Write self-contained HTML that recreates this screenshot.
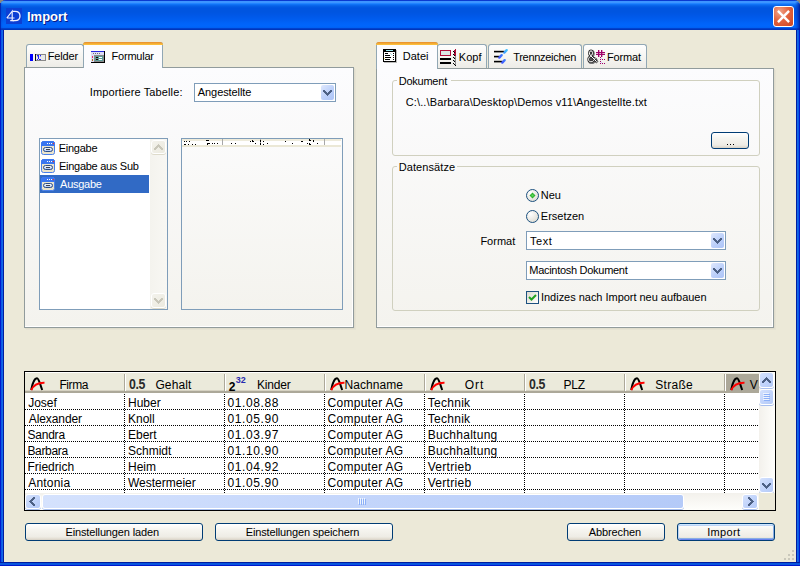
<!DOCTYPE html>
<html><head><meta charset="utf-8"><style>
*{box-sizing:border-box;margin:0;padding:0}
html,body{width:800px;height:566px;overflow:hidden;background:#8a887c}
body{position:relative;font-family:"Liberation Sans",sans-serif;font-size:11px;color:#000}
.a{position:absolute}
.t{position:absolute;white-space:nowrap;line-height:13px;font-size:11px}
svg{position:absolute;overflow:visible}
#frame{left:0;top:0;width:800px;height:566px;background:linear-gradient(to right,#0019cf 0,#0019cf 1px,#0855dd 1px,#166aee 3px,#001ea0 3px,#001ea0 4px,#0855dd 4px,#0855dd 796px,#001ea0 796px,#001ea0 797px,#166aee 797px,#0855dd 799px,#0019cf 799px);border-radius:6px 6px 0 0;overflow:hidden}
#bottomb{left:0;top:562px;width:800px;height:4px;background:linear-gradient(to bottom,#001ea0 0,#001ea0 1px,#0855dd 1px,#0855dd 3px,#0019cf 3px)}
#title{left:0;top:0;width:800px;height:30px;border-radius:6px 6px 0 0;
 background:linear-gradient(to bottom,#0a3ad0 0px,#0a3ad0 1px,#3d95ff 1px,#3d95ff 3px,#2284ff 3.5px,#0f72f5 4.5px,#0660e6 6px,#0055e0 8px,#0055e0 12px,#0057e6 15px,#005cee 19px,#0063f8 23px,#0066fc 26px,#0062f4 27.5px,#0048d8 28px,#0036bb 29.5px,#0036bb 30px)}
#client{left:4px;top:30px;width:792px;height:532px;background:#ece9d8}
.panel{position:absolute;border:1px solid #919b9c;background:linear-gradient(to bottom,#fcfcfe,#f4f3ee);box-shadow:inset -1px -1px 0 #fff,1px 1px 0 #e0ddcd,2px 2px 0 #e6e3d3}
.tab{position:absolute;border:1px solid #91a7b4;border-bottom:none;border-radius:3px 3px 0 0;background:linear-gradient(to bottom,#fefefe,#f6f5f1 50%,#ecebe6)}
.tabsel{position:absolute;border:1px solid #91a7b4;border-bottom:none;border-radius:3px 3px 0 0;background:#fcfcfe}
.tabsel:before{content:"";position:absolute;left:-1px;right:-1px;top:-1px;height:3px;background:linear-gradient(to bottom,#e68b2c,#ffc73c);border-radius:3px 3px 0 0}
.grp{position:absolute;border:1px solid #d0d0bf;border-radius:3px}
.combo{position:absolute;border:1px solid #7f9db9;background:#fff}
.cbtn{position:absolute;right:1px;top:1px;width:13px;height:15px;border-radius:2px;background:linear-gradient(135deg,#dfe8fd,#bcd0fa 55%,#adc4f7)}
.btn{position:absolute;border:1px solid #003c74;border-radius:3px;background:linear-gradient(to bottom,#fff,#f6f5f0 35%,#eeece5 80%,#e3ded3 92%,#d6d0c5)}
.sbtn{position:absolute;border-radius:3px;border:1px solid #fff;box-shadow:0 1px 0 #a9c0ee;background:linear-gradient(135deg,#d5e2fd,#c3d5fb 50%,#b4caf8)}
.dis{position:absolute;border-radius:3px;border:1px solid #fff;box-shadow:0 1px 0 #dedbcb;background:linear-gradient(135deg,#f3f2ec,#eceadf)}
</style></head><body>
<div id="frame" class="a"></div>
<div id="title" class="a"></div>
<div id="client" class="a"></div>
<div id="bottomb" class="a"></div>
<div class="a" style="left:795px;top:2px;width:5px;height:28px;border-top-right-radius:4px;background:linear-gradient(to right,rgba(0,40,180,0) 0px,rgba(0,40,180,0.35) 2px,rgba(0,30,160,0.7) 4px,rgba(0,20,140,0.9) 5px)"></div>
<div class="a" style="left:0px;top:3px;width:3px;height:27px;background:linear-gradient(to right,rgba(0,30,170,0.8) 0px,rgba(0,30,170,0.8) 1px,rgba(0,60,200,0.3) 1px,rgba(0,60,200,0) 3px)"></div>
<div class="a" style="left:6px;top:8px;width:16px;height:16px;background:#0c3fd4"></div>
<svg style="left:6px;top:8px" width="16" height="16"><path d="M0.8 10 L6.2 3.2 L6.2 12.6 M0.8 10 L8.5 10 M4.2 12.6 L8 12.6" fill="none" stroke="#eef0ff" stroke-width="1.2"/><path d="M6.5 3.3 L9 3.3 C12.5 3.3 14 5.5 14 8 C14 10.8 12 12.6 9 12.6 L6.5 12.6" fill="none" stroke="#eef0ff" stroke-width="1.3"/></svg>
<div class="t" style="left:28px;top:10px;font-size:13px;font-weight:bold;color:#0a1883;line-height:15px">Import</div>
<div class="t" style="left:27px;top:9px;font-size:13px;font-weight:bold;color:#fff;line-height:15px">Import</div>
<div class="a" style="left:773px;top:6px;width:21px;height:21px;border:1px solid #fff;border-radius:3px;background:radial-gradient(circle at 30% 25%,#f0a48a,#e3643f 45%,#cc4420)"></div>
<svg style="left:773px;top:6px" width="21" height="21"><path d="M5.8 5.8 L15.2 15.2 M15.2 5.8 L5.8 15.2" stroke="#fff" stroke-width="2.4" stroke-linecap="square"/></svg>
<div class="a" style="left:792px;top:550px;width:2px;height:2px;background:#cac8bb"></div>
<div class="a" style="left:788px;top:554px;width:2px;height:2px;background:#cac8bb"></div>
<div class="a" style="left:792px;top:554px;width:2px;height:2px;background:#cac8bb"></div>
<div class="a" style="left:784px;top:558px;width:2px;height:2px;background:#cac8bb"></div>
<div class="a" style="left:788px;top:558px;width:2px;height:2px;background:#cac8bb"></div>
<div class="a" style="left:792px;top:558px;width:2px;height:2px;background:#cac8bb"></div>
<div class="tab" style="left:26px;top:44px;width:58px;height:24px;"></div>
<div class="panel" style="left:24px;top:67px;width:330px;height:261px;"></div>
<div class="tabsel" style="left:83px;top:42px;width:80px;height:26px;"></div>
<svg style="left:30px;top:54px" width="17" height="8" shape-rendering="crispEdges"><rect x="0" y="0" width="3" height="7" fill="#0000ff" fill-opacity="1"/><rect x="5" y="0" width="11" height="7" fill="#888" fill-opacity="1"/><rect x="6" y="1" width="9" height="5" fill="#e8e8e8" fill-opacity="1"/><rect x="5" y="0" width="1" height="7" fill="#111" fill-opacity="1"/><rect x="7" y="1" width="2" height="1" fill="#2020ff" fill-opacity="1"/><rect x="10" y="1" width="1" height="1" fill="#2020ff" fill-opacity="1"/><rect x="8" y="2" width="1" height="3" fill="#2020ff" fill-opacity="1"/><rect x="7" y="5" width="1" height="1" fill="#2020ff" fill-opacity="1"/><rect x="9" y="5" width="2" height="1" fill="#2020ff" fill-opacity="1"/><rect x="7" y="2" width="1" height="1" fill="#9ac" fill-opacity="1"/><rect x="10" y="2" width="1" height="1" fill="#9ac" fill-opacity="1"/></svg>
<div class="t" id="t_felder" style="left:47.75px;top:50px;font-size:11px;line-height:13px;letter-spacing:-0.160px;">Felder</div>
<svg style="left:91px;top:51px" width="14" height="12" shape-rendering="crispEdges"><rect x="0" y="0" width="13" height="11" fill="#dcdcf6" fill-opacity="1"/><rect x="0" y="0" width="13" height="1" fill="#2424e0" fill-opacity="1"/><rect x="13" y="0" width="1" height="12" fill="#000" fill-opacity="1"/><rect x="0" y="11" width="14" height="1" fill="#000" fill-opacity="1"/><rect x="2" y="2" width="1" height="1" fill="#707070" fill-opacity="1"/><rect x="4" y="2" width="1" height="1" fill="#707070" fill-opacity="1"/><rect x="6" y="2" width="1" height="1" fill="#707070" fill-opacity="1"/><rect x="8" y="2" width="1" height="1" fill="#707070" fill-opacity="1"/><rect x="3" y="4" width="10" height="7" fill="#8a8a8a" fill-opacity="1"/><rect x="4" y="5" width="8" height="5" fill="#5a9a98" fill-opacity="1"/><rect x="5" y="6" width="2" height="1" fill="#200" fill-opacity="1"/><rect x="5" y="8" width="2" height="1" fill="#200" fill-opacity="1"/><rect x="8" y="6" width="3" height="1" fill="#fff" fill-opacity="1"/><rect x="8" y="8" width="3" height="1" fill="#fff" fill-opacity="1"/><rect x="1" y="5" width="1" height="2" fill="#e03060" fill-opacity="1"/><rect x="1" y="8" width="1" height="2" fill="#b07010" fill-opacity="1"/></svg>
<div class="t" id="t_formular" style="left:111.60px;top:50px;font-size:11px;line-height:13px;letter-spacing:-0.235px;">Formular</div>
<div class="t" id="t_imp" style="left:89.85px;top:86px;font-size:11px;line-height:13px;letter-spacing:0.131px;">Importiere Tabelle:</div>
<div class="combo" style="left:194px;top:83px;width:142px;height:19px;"><div class="cbtn"></div></div>
<svg style="left:323px;top:90px" width="9" height="6" shape-rendering="crispEdges"><rect x="0" y="0" width="2" height="1" fill="#4d6185" fill-opacity="1"/><rect x="7" y="0" width="2" height="1" fill="#4d6185" fill-opacity="1"/><rect x="0" y="1" width="3" height="1" fill="#4d6185" fill-opacity="1"/><rect x="6" y="1" width="3" height="1" fill="#4d6185" fill-opacity="1"/><rect x="1" y="2" width="3" height="1" fill="#4d6185" fill-opacity="1"/><rect x="5" y="2" width="3" height="1" fill="#4d6185" fill-opacity="1"/><rect x="2" y="3" width="5" height="1" fill="#4d6185" fill-opacity="1"/><rect x="3" y="4" width="3" height="1" fill="#4d6185" fill-opacity="1"/><rect x="4" y="5" width="1" height="1" fill="#4d6185" fill-opacity="1"/></svg>
<div class="t" id="t_ang" style="left:197.80px;top:86px;font-size:11px;line-height:13px;letter-spacing:-0.080px;">Angestellte</div>
<div class="combo" style="left:39px;top:138px;width:129px;height:172px;"></div>
<div class="a" style="left:150px;top:139px;width:17px;height:170px;background:linear-gradient(to right,#f4f3ee,#f8f7f3)"></div>
<div class="dis" style="left:151px;top:140px;width:15px;height:14px;"></div>
<svg style="left:154px;top:144px" width="9" height="6" shape-rendering="crispEdges"><rect x="4" y="0" width="1" height="1" fill="#c9c7ba" fill-opacity="1"/><rect x="3" y="1" width="3" height="1" fill="#c9c7ba" fill-opacity="1"/><rect x="2" y="2" width="5" height="1" fill="#c9c7ba" fill-opacity="1"/><rect x="1" y="3" width="3" height="1" fill="#c9c7ba" fill-opacity="1"/><rect x="5" y="3" width="3" height="1" fill="#c9c7ba" fill-opacity="1"/><rect x="0" y="4" width="3" height="1" fill="#c9c7ba" fill-opacity="1"/><rect x="6" y="4" width="3" height="1" fill="#c9c7ba" fill-opacity="1"/><rect x="0" y="5" width="2" height="1" fill="#c9c7ba" fill-opacity="1"/><rect x="7" y="5" width="2" height="1" fill="#c9c7ba" fill-opacity="1"/></svg>
<div class="dis" style="left:151px;top:293px;width:15px;height:15px;"></div>
<svg style="left:154px;top:298px" width="9" height="6" shape-rendering="crispEdges"><rect x="0" y="0" width="2" height="1" fill="#c9c7ba" fill-opacity="1"/><rect x="7" y="0" width="2" height="1" fill="#c9c7ba" fill-opacity="1"/><rect x="0" y="1" width="3" height="1" fill="#c9c7ba" fill-opacity="1"/><rect x="6" y="1" width="3" height="1" fill="#c9c7ba" fill-opacity="1"/><rect x="1" y="2" width="3" height="1" fill="#c9c7ba" fill-opacity="1"/><rect x="5" y="2" width="3" height="1" fill="#c9c7ba" fill-opacity="1"/><rect x="2" y="3" width="5" height="1" fill="#c9c7ba" fill-opacity="1"/><rect x="3" y="4" width="3" height="1" fill="#c9c7ba" fill-opacity="1"/><rect x="4" y="5" width="1" height="1" fill="#c9c7ba" fill-opacity="1"/></svg>
<div class="a" style="left:40px;top:175px;width:109px;height:18px;background:#316ac5"></div>
<svg style="left:41px;top:141px" width="14" height="14"><defs><linearGradient id="pg" x1="0" y1="0" x2="0" y2="1"><stop offset="0" stop-color="#ffffff"/><stop offset="1" stop-color="#a8c0f0"/></linearGradient></defs><rect x="0.5" y="0.5" width="13" height="13" rx="2" fill="#ebe4cc" stroke="#4a80e8"/><path d="M0.5 4.5 L0.5 2.5 Q0.5 0.5 2.5 0.5 L11.5 0.5 Q13.5 0.5 13.5 2.5 L13.5 4.5 Z" fill="#3a76f0" stroke="#3a76f0"/><rect x="6" y="2" width="1" height="1" fill="#fff"/><rect x="8" y="2" width="1" height="1" fill="#fff"/><rect x="10" y="2" width="1" height="1" fill="#fff"/><rect x="12" y="2" width="1" height="1.2" fill="#ff3020"/><rect x="2.5" y="6.5" width="9" height="4" rx="2" fill="url(#pg)" stroke="#2a4c88"/><rect x="5" y="8" width="4" height="1" fill="#444"/></svg>
<div class="t" id="t_list0" style="left:58.75px;top:142px;font-size:11px;line-height:13px;letter-spacing:-0.265px;color:#000">Eingabe</div>
<svg style="left:41px;top:159px" width="14" height="14"><defs><linearGradient id="pg" x1="0" y1="0" x2="0" y2="1"><stop offset="0" stop-color="#ffffff"/><stop offset="1" stop-color="#a8c0f0"/></linearGradient></defs><rect x="0.5" y="0.5" width="13" height="13" rx="2" fill="#ebe4cc" stroke="#4a80e8"/><path d="M0.5 4.5 L0.5 2.5 Q0.5 0.5 2.5 0.5 L11.5 0.5 Q13.5 0.5 13.5 2.5 L13.5 4.5 Z" fill="#3a76f0" stroke="#3a76f0"/><rect x="6" y="2" width="1" height="1" fill="#fff"/><rect x="8" y="2" width="1" height="1" fill="#fff"/><rect x="10" y="2" width="1" height="1" fill="#fff"/><rect x="12" y="2" width="1" height="1.2" fill="#ff3020"/><rect x="2.5" y="6.5" width="9" height="4" rx="2" fill="url(#pg)" stroke="#2a4c88"/><rect x="5" y="8" width="4" height="1" fill="#444"/></svg>
<div class="t" id="t_list1" style="left:59.00px;top:160px;font-size:11px;line-height:13px;letter-spacing:-0.280px;color:#000">Eingabe aus Sub</div>
<svg style="left:41px;top:177px" width="14" height="14"><defs><linearGradient id="pg" x1="0" y1="0" x2="0" y2="1"><stop offset="0" stop-color="#ffffff"/><stop offset="1" stop-color="#a8c0f0"/></linearGradient></defs><rect x="0.5" y="0.5" width="13" height="13" rx="2" fill="#ebe4cc" stroke="#4a80e8"/><path d="M0.5 4.5 L0.5 2.5 Q0.5 0.5 2.5 0.5 L11.5 0.5 Q13.5 0.5 13.5 2.5 L13.5 4.5 Z" fill="#3a76f0" stroke="#3a76f0"/><rect x="6" y="2" width="1" height="1" fill="#fff"/><rect x="8" y="2" width="1" height="1" fill="#fff"/><rect x="10" y="2" width="1" height="1" fill="#fff"/><rect x="12" y="2" width="1" height="1.2" fill="#ff3020"/><rect x="2.5" y="6.5" width="9" height="4" rx="2" fill="url(#pg)" stroke="#2a4c88"/><rect x="5" y="8" width="4" height="1" fill="#444"/></svg>
<div class="t" id="t_list2" style="left:60.10px;top:178px;font-size:11px;line-height:13px;letter-spacing:-0.268px;color:#fff">Ausgabe</div>
<div class="combo" style="left:181px;top:138px;width:162px;height:172px;background:linear-gradient(to bottom,#fbfbfb,#f4f3ee)"></div>
<svg style="left:182px;top:139px" width="159" height="8" shape-rendering="crispEdges"><rect x="0" y="0" width="159" height="2" fill="#eeebdb" fill-opacity="1"/><rect x="0" y="2" width="159" height="4" fill="#ffffff" fill-opacity="1"/><rect x="0" y="6" width="159" height="2" fill="#ebe8d6" fill-opacity="1"/></svg>
<svg style="left:222px;top:139px" width="1" height="6" shape-rendering="crispEdges"><rect x="0" y="0" width="1" height="6" fill="#a8a8a8" fill-opacity="1"/></svg>
<svg style="left:260px;top:139px" width="1" height="6" shape-rendering="crispEdges"><rect x="0" y="0" width="1" height="6" fill="#a8a8a8" fill-opacity="1"/></svg>
<svg style="left:324px;top:139px" width="1" height="6" shape-rendering="crispEdges"><rect x="0" y="0" width="1" height="6" fill="#a8a8a8" fill-opacity="1"/></svg>
<svg style="left:182px;top:139px" width="159" height="8" shape-rendering="crispEdges"><rect x="2" y="2" width="1" height="1" fill="#000" fill-opacity="1"/><rect x="4" y="2" width="1" height="1" fill="#000" fill-opacity="1"/><rect x="7" y="2" width="1" height="1" fill="#000" fill-opacity="1"/><rect x="2" y="5" width="1" height="1" fill="#000" fill-opacity="1"/><rect x="3" y="5" width="1" height="1" fill="#000" fill-opacity="1"/><rect x="6" y="5" width="1" height="1" fill="#000" fill-opacity="1"/><rect x="10" y="5" width="1" height="1" fill="#000" fill-opacity="1"/><rect x="13" y="5" width="1" height="1" fill="#000" fill-opacity="1"/><rect x="24" y="1" width="1" height="1" fill="#000" fill-opacity="1"/><rect x="25" y="1" width="1" height="1" fill="#000" fill-opacity="1"/><rect x="26" y="1" width="1" height="1" fill="#000" fill-opacity="1"/><rect x="25" y="4" width="1" height="1" fill="#000" fill-opacity="1"/><rect x="26" y="4" width="1" height="1" fill="#000" fill-opacity="1"/><rect x="27" y="4" width="1" height="1" fill="#000" fill-opacity="1"/><rect x="25" y="5" width="1" height="1" fill="#000" fill-opacity="1"/><rect x="30" y="4" width="1" height="1" fill="#000" fill-opacity="1"/><rect x="32" y="4" width="1" height="1" fill="#000" fill-opacity="1"/><rect x="35" y="4" width="1" height="1" fill="#000" fill-opacity="1"/><rect x="49" y="4" width="1" height="1" fill="#000" fill-opacity="1"/><rect x="53" y="4" width="1" height="1" fill="#000" fill-opacity="1"/><rect x="68" y="2" width="1" height="1" fill="#000" fill-opacity="1"/><rect x="70" y="1" width="1" height="1" fill="#000" fill-opacity="1"/><rect x="71" y="2" width="1" height="1" fill="#000" fill-opacity="1"/><rect x="70" y="2" width="1" height="1" fill="#000" fill-opacity="1"/><rect x="73" y="4" width="1" height="1" fill="#000" fill-opacity="1"/><rect x="78" y="1" width="1" height="1" fill="#000" fill-opacity="1"/><rect x="78" y="2" width="1" height="1" fill="#000" fill-opacity="1"/><rect x="78" y="4" width="1" height="1" fill="#000" fill-opacity="1"/><rect x="78" y="5" width="1" height="1" fill="#000" fill-opacity="1"/><rect x="81" y="2" width="1" height="1" fill="#000" fill-opacity="1"/><rect x="81" y="5" width="1" height="1" fill="#000" fill-opacity="1"/><rect x="85" y="4" width="1" height="1" fill="#000" fill-opacity="1"/><rect x="103" y="2" width="1" height="1" fill="#000" fill-opacity="1"/><rect x="110" y="4" width="1" height="1" fill="#000" fill-opacity="1"/><rect x="119" y="2" width="1" height="1" fill="#000" fill-opacity="1"/><rect x="120" y="2" width="1" height="1" fill="#000" fill-opacity="1"/><rect x="125" y="4" width="1" height="1" fill="#000" fill-opacity="1"/><rect x="127" y="4" width="1" height="1" fill="#000" fill-opacity="1"/><rect x="128" y="5" width="1" height="1" fill="#000" fill-opacity="1"/><rect x="127" y="5" width="1" height="1" fill="#000" fill-opacity="1"/><rect x="127" y="0" width="1" height="1" fill="#000" fill-opacity="1"/><rect x="127" y="1" width="1" height="1" fill="#000" fill-opacity="1"/><rect x="128" y="1" width="1" height="1" fill="#000" fill-opacity="1"/><rect x="131" y="1" width="1" height="1" fill="#000" fill-opacity="1"/><rect x="131" y="2" width="1" height="1" fill="#000" fill-opacity="1"/><rect x="135" y="4" width="1" height="1" fill="#000" fill-opacity="1"/></svg>
<div class="tab" style="left:437px;top:44px;width:50px;height:25px;"></div>
<div class="tab" style="left:488px;top:44px;width:94px;height:25px;"></div>
<div class="tab" style="left:583px;top:44px;width:64px;height:25px;"></div>
<div class="panel" style="left:376px;top:68px;width:398px;height:260px;"></div>
<div class="tabsel" style="left:376px;top:42px;width:62px;height:27px;"></div>
<svg style="left:383px;top:49px" width="14" height="14" shape-rendering="crispEdges"><rect x="0" y="0" width="13" height="13" fill="#000" fill-opacity="1"/><rect x="13" y="1" width="1" height="13" fill="#bbb" fill-opacity="1"/><rect x="1" y="13" width="13" height="1" fill="#bbb" fill-opacity="1"/><rect x="1" y="3" width="11" height="9" fill="#fff" fill-opacity="1"/><rect x="3" y="1" width="7" height="1" fill="#9de8f0" fill-opacity="1"/><rect x="2" y="4" width="3" height="1" fill="#000" fill-opacity="1"/><rect x="2" y="6" width="5" height="1" fill="#000" fill-opacity="1"/><rect x="2" y="8" width="6" height="1" fill="#000" fill-opacity="1"/><rect x="2" y="10" width="5" height="1" fill="#000" fill-opacity="1"/><rect x="10" y="4" width="1" height="1" fill="#000" fill-opacity="1"/><rect x="10" y="6" width="1" height="1" fill="#000" fill-opacity="1"/><rect x="10" y="8" width="1" height="1" fill="#000" fill-opacity="1"/><rect x="10" y="10" width="1" height="1" fill="#000" fill-opacity="1"/><rect x="7" y="4" width="1" height="1" fill="#ccc" fill-opacity="1"/><rect x="8" y="5" width="1" height="1" fill="#9de8f0" fill-opacity="1"/><rect x="1" y="9" width="1" height="1" fill="#f8e860" fill-opacity="1"/></svg>
<div class="t" id="t_datei" style="left:402.80px;top:50px;font-size:11px;line-height:13px;letter-spacing:-0.000px;">Datei</div>
<svg style="left:440px;top:48px" width="17" height="18" shape-rendering="crispEdges"><rect x="0" y="2" width="11" height="6" fill="#b0103a" fill-opacity="1"/><rect x="1" y="3" width="9" height="4" fill="#dde8e6" fill-opacity="1"/><rect x="0" y="10" width="11" height="2" fill="#000" fill-opacity="1"/><rect x="0" y="14" width="11" height="2" fill="#000" fill-opacity="1"/><rect x="15" y="1" width="1" height="7" fill="#b0103a" fill-opacity="1"/><rect x="14" y="2" width="1" height="2" fill="#b0103a" fill-opacity="1"/><rect x="14" y="5" width="1" height="2" fill="#b0103a" fill-opacity="1"/><rect x="13" y="3" width="1" height="1" fill="#000" fill-opacity="1"/><rect x="14" y="4" width="1" height="1" fill="#000" fill-opacity="1"/><rect x="13" y="6" width="1" height="1" fill="#000" fill-opacity="1"/><rect x="14" y="7" width="1" height="1" fill="#000" fill-opacity="1"/><rect x="15" y="8" width="1" height="9" fill="#888" fill-opacity="1"/><rect x="14" y="9" width="1" height="2" fill="#aaa" fill-opacity="1"/><rect x="14" y="12" width="1" height="2" fill="#aaa" fill-opacity="1"/><rect x="13" y="9" width="1" height="1" fill="#000" fill-opacity="1"/><rect x="14" y="10" width="1" height="1" fill="#000" fill-opacity="1"/><rect x="13" y="12" width="1" height="1" fill="#000" fill-opacity="1"/><rect x="14" y="13" width="1" height="1" fill="#000" fill-opacity="1"/><rect x="13" y="15" width="1" height="1" fill="#000" fill-opacity="1"/><rect x="14" y="16" width="1" height="1" fill="#000" fill-opacity="1"/><rect x="15" y="17" width="1" height="1" fill="#000" fill-opacity="1"/></svg>
<div class="t" id="t_kopf" style="left:458.80px;top:51px;font-size:11px;line-height:13px;letter-spacing:0.004px;">Kopf</div>
<svg style="left:494px;top:49px" width="14" height="15"><defs><linearGradient id="tzg" x1="0" y1="1" x2="1" y2="0"><stop offset="0" stop-color="#4040ff"/><stop offset="1" stop-color="#40c0ff"/></linearGradient></defs><rect x="0" y="1.8" width="10.5" height="1.6" fill="#000"/><rect x="0" y="6.8" width="5.5" height="1.6" fill="#000"/><rect x="0" y="11.8" width="8.5" height="1.6" fill="#000"/><path d="M10.3 3.6 L12.7 1.2 M5.3 8.6 L7.7 6.2 M8.3 13.6 L10.7 11.2" stroke="url(#tzg)" stroke-width="2.4" stroke-linecap="round"/></svg>
<div class="t" id="t_trenn" style="left:513.20px;top:51px;font-size:11px;line-height:13px;letter-spacing:-0.289px;">Trennzeichen</div>
<svg style="left:587px;top:49px" width="19" height="16"><path d="M9.7 12.7 L3.2 6.2 C2 5 2.2 1.8 4 1.8 C5.8 1.8 6 4.8 4.8 6 L2.5 8.2 C1 9.6 1.2 12.8 4 12.8 C6 12.8 7.2 11 8.6 8.6" fill="none" stroke="#777" stroke-width="3" transform="translate(0.8,0.8)"/><path d="M9.7 12.7 L3.2 6.2 C2 5 2.2 1.8 4 1.8 C5.8 1.8 6 4.8 4.8 6 L2.5 8.2 C1 9.6 1.2 12.8 4 12.8 C6 12.8 7.2 11 8.6 8.6" fill="#555" stroke="#2e2e2e" stroke-width="2.6"/><path d="M9.7 12.7 L3.2 6.2 C2 5 2.2 1.8 4 1.8 C5.8 1.8 6 4.8 4.8 6 L2.5 8.2 C1 9.6 1.2 12.8 4 12.8 C6 12.8 7.2 11 8.6 8.6" fill="none" stroke="#fff" stroke-width="1"/></svg>
<svg style="left:587px;top:49px" width="19" height="16" shape-rendering="crispEdges"><rect x="11" y="1" width="1" height="7" fill="#a0006a" fill-opacity="1"/><rect x="12" y="1" width="1" height="7" fill="#a0006a" fill-opacity="0.35"/><rect x="14" y="1" width="1" height="7" fill="#a0006a" fill-opacity="1"/><rect x="15" y="1" width="1" height="7" fill="#a0006a" fill-opacity="0.35"/><rect x="9" y="3" width="9" height="1" fill="#a0006a" fill-opacity="1"/><rect x="9" y="5" width="9" height="1" fill="#a0006a" fill-opacity="1"/><rect x="9" y="4" width="9" height="1" fill="#a0006a" fill-opacity="0.25"/><rect x="13" y="8" width="1" height="1" fill="#a0006a" fill-opacity="1"/><rect x="13" y="10" width="1" height="1" fill="#a0006a" fill-opacity="1"/><rect x="13" y="12" width="1" height="1" fill="#a0006a" fill-opacity="1"/><rect x="13" y="14" width="1" height="1" fill="#a0006a" fill-opacity="1"/><rect x="15" y="10" width="1" height="1" fill="#a0006a" fill-opacity="1"/><rect x="17" y="10" width="1" height="1" fill="#a0006a" fill-opacity="1"/><rect x="15" y="14" width="1" height="1" fill="#a0006a" fill-opacity="1"/><rect x="17" y="14" width="1" height="1" fill="#a0006a" fill-opacity="1"/><rect x="14" y="9" width="1" height="1" fill="#c8c8ff" fill-opacity="1"/><rect x="14" y="13" width="1" height="1" fill="#c8c8ff" fill-opacity="1"/></svg>
<div class="t" id="t_formattab" style="left:607.00px;top:51px;font-size:11px;line-height:13px;letter-spacing:-0.160px;">Format</div>
<div class="grp" style="left:392px;top:80px;width:368px;height:76px;"></div>
<div class="a" style="left:397px;top:76px;width:54px;height:8px;background:#fbfbfc"></div>
<div class="t" id="t_dok" style="left:398.70px;top:75px;font-size:11px;line-height:13px;letter-spacing:-0.232px;">Dokument</div>
<div class="t" id="t_path" style="left:405.80px;top:96px;font-size:11px;line-height:13px;letter-spacing:0.114px;">C:\..\Barbara\Desktop\Demos v11\Angestellte.txt</div>
<div class="btn" style="left:711px;top:132px;width:38px;height:17px;"></div>
<svg style="left:727px;top:144px" width="8" height="1" shape-rendering="crispEdges"><rect x="0" y="0" width="1" height="1" fill="#000" fill-opacity="1"/><rect x="3" y="0" width="1" height="1" fill="#000" fill-opacity="1"/><rect x="6" y="0" width="1" height="1" fill="#000" fill-opacity="1"/></svg>
<div class="grp" style="left:392px;top:166px;width:368px;height:145px;"></div>
<div class="a" style="left:397px;top:162px;width:60px;height:8px;background:#f9f9f8"></div>
<div class="t" id="t_datens" style="left:398.70px;top:161px;font-size:11px;line-height:13px;letter-spacing:0.088px;">Datens&auml;tze</div>
<svg style="left:526px;top:189px" width="13" height="13"><defs><radialGradient id="rg189" cx="0.35" cy="0.3" r="0.8"><stop offset="0" stop-color="#fff"/><stop offset="1" stop-color="#dcdad0"/></radialGradient></defs><circle cx="6.5" cy="6.5" r="6" fill="url(#rg189)" stroke="#1c5180" stroke-width="1"/><path d="M6.5 3.5 L9.5 6.5 L6.5 9.5 L3.5 6.5Z" fill="#2fb12f"/><rect x="5.5" y="5.5" width="2" height="2" fill="#5fdc5f"/></svg>
<div class="t" id="t_neu" style="left:540.80px;top:189px;font-size:11px;line-height:13px;letter-spacing:0.000px;">Neu</div>
<svg style="left:526px;top:210px" width="13" height="13"><defs><radialGradient id="rg210" cx="0.35" cy="0.3" r="0.8"><stop offset="0" stop-color="#fff"/><stop offset="1" stop-color="#dcdad0"/></radialGradient></defs><circle cx="6.5" cy="6.5" r="6" fill="url(#rg210)" stroke="#1c5180" stroke-width="1"/></svg>
<div class="t" id="t_ers" style="left:540.80px;top:210px;font-size:11px;line-height:13px;letter-spacing:0.004px;">Ersetzen</div>
<div class="t" id="t_formatlbl" style="left:480.40px;top:235px;font-size:11px;line-height:13px;letter-spacing:0.000px;">Format</div>
<div class="combo" style="left:526px;top:231px;width:200px;height:19px;"><div class="cbtn"></div></div>
<svg style="left:713px;top:238px" width="9" height="6" shape-rendering="crispEdges"><rect x="0" y="0" width="2" height="1" fill="#4d6185" fill-opacity="1"/><rect x="7" y="0" width="2" height="1" fill="#4d6185" fill-opacity="1"/><rect x="0" y="1" width="3" height="1" fill="#4d6185" fill-opacity="1"/><rect x="6" y="1" width="3" height="1" fill="#4d6185" fill-opacity="1"/><rect x="1" y="2" width="3" height="1" fill="#4d6185" fill-opacity="1"/><rect x="5" y="2" width="3" height="1" fill="#4d6185" fill-opacity="1"/><rect x="2" y="3" width="5" height="1" fill="#4d6185" fill-opacity="1"/><rect x="3" y="4" width="3" height="1" fill="#4d6185" fill-opacity="1"/><rect x="4" y="5" width="1" height="1" fill="#4d6185" fill-opacity="1"/></svg>
<div class="t" id="t_text" style="left:530.05px;top:235px;font-size:11px;line-height:13px;letter-spacing:0.537px;">Text</div>
<div class="combo" style="left:526px;top:261px;width:200px;height:19px;"><div class="cbtn"></div></div>
<svg style="left:713px;top:268px" width="9" height="6" shape-rendering="crispEdges"><rect x="0" y="0" width="2" height="1" fill="#4d6185" fill-opacity="1"/><rect x="7" y="0" width="2" height="1" fill="#4d6185" fill-opacity="1"/><rect x="0" y="1" width="3" height="1" fill="#4d6185" fill-opacity="1"/><rect x="6" y="1" width="3" height="1" fill="#4d6185" fill-opacity="1"/><rect x="1" y="2" width="3" height="1" fill="#4d6185" fill-opacity="1"/><rect x="5" y="2" width="3" height="1" fill="#4d6185" fill-opacity="1"/><rect x="2" y="3" width="5" height="1" fill="#4d6185" fill-opacity="1"/><rect x="3" y="4" width="3" height="1" fill="#4d6185" fill-opacity="1"/><rect x="4" y="5" width="1" height="1" fill="#4d6185" fill-opacity="1"/></svg>
<div class="t" id="t_mac" style="left:529.25px;top:264px;font-size:11px;line-height:13px;letter-spacing:-0.285px;">Macintosh Dokument</div>
<div class="a" style="left:526px;top:291px;width:13px;height:13px;border:1px solid #1c5180;background:linear-gradient(135deg,#dcdad0,#f5f4ef 70%,#fff)"></div>
<svg style="left:526px;top:291px" width="13" height="13"><path d="M3 6 L5.5 8.5 L10 4" fill="none" stroke="#21a121" stroke-width="2"/></svg>
<div class="t" id="t_ind" style="left:541.00px;top:291px;font-size:11px;line-height:13px;letter-spacing:-0.026px;">Indizes nach Import neu aufbauen</div>
<div class="a" style="left:24px;top:371px;width:752px;height:140px;border:1px solid #000;background:#fff"></div>
<div class="a" style="left:25px;top:372px;width:734px;height:21px;background:linear-gradient(to bottom,#fff 0,#fff 1px,#ebeadb 1px,#ebeadb 18px,#d6d2c2 18px,#d6d2c2 19px,#aca899 19px,#aca899 21px)"></div>
<div class="a" style="left:725px;top:374px;width:34px;height:19px;background:#aca899"></div>
<div class="a" style="left:124px;top:374px;width:1px;height:17px;background:#aca899"></div>
<div class="a" style="left:125px;top:374px;width:1px;height:17px;background:#fff"></div>
<div class="a" style="left:224px;top:374px;width:1px;height:17px;background:#aca899"></div>
<div class="a" style="left:225px;top:374px;width:1px;height:17px;background:#fff"></div>
<div class="a" style="left:324px;top:374px;width:1px;height:17px;background:#aca899"></div>
<div class="a" style="left:325px;top:374px;width:1px;height:17px;background:#fff"></div>
<div class="a" style="left:424px;top:374px;width:1px;height:17px;background:#aca899"></div>
<div class="a" style="left:425px;top:374px;width:1px;height:17px;background:#fff"></div>
<div class="a" style="left:524px;top:374px;width:1px;height:17px;background:#aca899"></div>
<div class="a" style="left:525px;top:374px;width:1px;height:17px;background:#fff"></div>
<div class="a" style="left:624px;top:374px;width:1px;height:17px;background:#aca899"></div>
<div class="a" style="left:625px;top:374px;width:1px;height:17px;background:#fff"></div>
<div class="a" style="left:724px;top:374px;width:1px;height:17px;background:#aca899"></div>
<div class="a" style="left:725px;top:374px;width:1px;height:17px;background:#fff"></div>
<svg style="left:30px;top:377px" width="16" height="15"><path d="M1.2 13 C2.2 7 4.5 1.2 7 1.2 C8.8 1.2 9.6 6 12.2 13" fill="none" stroke="#000" stroke-width="2"/><path d="M1.2 13.2 C3 9 6.5 5.6 14.5 5.8" fill="none" stroke="#f00" stroke-width="2.1"/></svg>
<div class="t" id="t_h0" style="left:59.40px;top:378px;font-size:12px;line-height:14px;letter-spacing:-0.400px;">Firma</div>
<div class="t" style="left:128.6px;top:377px;font-size:14px;line-height:14px;font-weight:bold;color:#2a2a2a;letter-spacing:-0.4px;transform:scaleX(0.88);transform-origin:0 0">0.5</div>
<div class="t" id="t_h1" style="left:155.40px;top:378px;font-size:12px;line-height:14px;letter-spacing:0.120px;">Gehalt</div>
<div class="t" id="t_two" style="left:228.80px;top:380px;font-size:12px;line-height:14px;letter-spacing:0.000px;font-weight:bold">2</div>
<div class="t" id="t_32" style="left:235.66px;top:375px;font-size:9px;line-height:13px;letter-spacing:0.000px;font-weight:bold;color:#2a2ab0;line-height:11px">32</div>
<div class="t" id="t_h2" style="left:257.00px;top:378px;font-size:12px;line-height:14px;letter-spacing:-0.200px;">Kinder</div>
<svg style="left:330px;top:377px" width="16" height="15"><path d="M1.2 13 C2.2 7 4.5 1.2 7 1.2 C8.8 1.2 9.6 6 12.2 13" fill="none" stroke="#000" stroke-width="2"/><path d="M1.2 13.2 C3 9 6.5 5.6 14.5 5.8" fill="none" stroke="#f00" stroke-width="2.1"/></svg>
<div class="t" id="t_h3" style="left:344.60px;top:378px;font-size:12px;line-height:14px;letter-spacing:0.029px;">Nachname</div>
<svg style="left:430px;top:377px" width="16" height="15"><path d="M1.2 13 C2.2 7 4.5 1.2 7 1.2 C8.8 1.2 9.6 6 12.2 13" fill="none" stroke="#000" stroke-width="2"/><path d="M1.2 13.2 C3 9 6.5 5.6 14.5 5.8" fill="none" stroke="#f00" stroke-width="2.1"/></svg>
<div class="t" id="t_h4" style="left:464.75px;top:378px;font-size:12px;line-height:14px;letter-spacing:1.000px;">Ort</div>
<div class="t" style="left:528.6px;top:377px;font-size:14px;line-height:14px;font-weight:bold;color:#2a2a2a;letter-spacing:-0.4px;transform:scaleX(0.88);transform-origin:0 0">0.5</div>
<div class="t" id="t_h5" style="left:563.50px;top:378px;font-size:12px;line-height:14px;letter-spacing:-0.200px;">PLZ</div>
<svg style="left:630px;top:377px" width="16" height="15"><path d="M1.2 13 C2.2 7 4.5 1.2 7 1.2 C8.8 1.2 9.6 6 12.2 13" fill="none" stroke="#000" stroke-width="2"/><path d="M1.2 13.2 C3 9 6.5 5.6 14.5 5.8" fill="none" stroke="#f00" stroke-width="2.1"/></svg>
<div class="t" id="t_h6" style="left:655.25px;top:378px;font-size:12px;line-height:14px;letter-spacing:0.280px;">Stra&szlig;e</div>
<svg style="left:730px;top:377px" width="16" height="15"><path d="M1.2 13 C2.2 7 4.5 1.2 7 1.2 C8.8 1.2 9.6 6 12.2 13" fill="none" stroke="#000" stroke-width="2"/><path d="M1.2 13.2 C3 9 6.5 5.6 14.5 5.8" fill="none" stroke="#f00" stroke-width="2.1"/></svg>
<div class="t" id="t_h7" style="left:749.80px;top:378px;font-size:12px;line-height:14px;letter-spacing:-0.200px;">V</div>
<div class="t" id="t_r0c0" style="left:28.20px;top:396px;font-size:12px;line-height:14px;letter-spacing:0.000px;">Josef</div>
<div class="t" id="t_r0c1" style="left:128.00px;top:396px;font-size:12px;line-height:14px;letter-spacing:0.000px;">Huber</div>
<div class="t" id="t_r0c2" style="left:227.50px;top:396px;font-size:12px;line-height:14px;letter-spacing:0.605px;">01.08.88</div>
<div class="t" id="t_r0c3" style="left:327.50px;top:396px;font-size:12px;line-height:14px;letter-spacing:0.280px;">Computer AG</div>
<div class="t" style="left:427.75px;top:396px;font-size:12px;line-height:14px;letter-spacing:0.280px">Technik</div>
<div class="a" style="left:25px;top:409px;width:734px;height:1px;background:repeating-linear-gradient(to right,#000 0,#000 1px,transparent 1px,transparent 2px)"></div>
<div class="t" id="t_r1c0" style="left:28.80px;top:412px;font-size:12px;line-height:14px;letter-spacing:-0.100px;">Alexander</div>
<div class="t" style="left:128.00px;top:412px;font-size:12px;line-height:14px;letter-spacing:0.000px">Knoll</div>
<div class="t" style="left:227.50px;top:412px;font-size:12px;line-height:14px;letter-spacing:0.605px">01.05.90</div>
<div class="t" style="left:327.50px;top:412px;font-size:12px;line-height:14px;letter-spacing:0.280px">Computer AG</div>
<div class="t" style="left:427.75px;top:412px;font-size:12px;line-height:14px;letter-spacing:0.280px">Technik</div>
<div class="a" style="left:25px;top:425px;width:734px;height:1px;background:repeating-linear-gradient(to right,#000 0,#000 1px,transparent 1px,transparent 2px)"></div>
<div class="t" id="t_r2c0" style="left:27.40px;top:428px;font-size:12px;line-height:14px;letter-spacing:-0.200px;">Sandra</div>
<div class="t" style="left:128.00px;top:428px;font-size:12px;line-height:14px;letter-spacing:0.000px">Ebert</div>
<div class="t" style="left:227.50px;top:428px;font-size:12px;line-height:14px;letter-spacing:0.605px">01.03.97</div>
<div class="t" style="left:327.50px;top:428px;font-size:12px;line-height:14px;letter-spacing:0.280px">Computer AG</div>
<div class="t" id="t_r2c4" style="left:427.75px;top:428px;font-size:12px;line-height:14px;letter-spacing:0.280px;">Buchhaltung</div>
<div class="a" style="left:25px;top:441px;width:734px;height:1px;background:repeating-linear-gradient(to right,#000 0,#000 1px,transparent 1px,transparent 2px)"></div>
<div class="t" id="t_r3c0" style="left:27.40px;top:444px;font-size:12px;line-height:14px;letter-spacing:-0.337px;">Barbara</div>
<div class="t" style="left:128.00px;top:444px;font-size:12px;line-height:14px;letter-spacing:0.000px">Schmidt</div>
<div class="t" style="left:227.50px;top:444px;font-size:12px;line-height:14px;letter-spacing:0.605px">01.10.90</div>
<div class="t" style="left:327.50px;top:444px;font-size:12px;line-height:14px;letter-spacing:0.280px">Computer AG</div>
<div class="t" style="left:427.75px;top:444px;font-size:12px;line-height:14px;letter-spacing:0.280px">Buchhaltung</div>
<div class="a" style="left:25px;top:457px;width:734px;height:1px;background:repeating-linear-gradient(to right,#000 0,#000 1px,transparent 1px,transparent 2px)"></div>
<div class="t" id="t_r4c0" style="left:27.40px;top:460px;font-size:12px;line-height:14px;letter-spacing:-0.000px;">Friedrich</div>
<div class="t" style="left:128.00px;top:460px;font-size:12px;line-height:14px;letter-spacing:0.000px">Heim</div>
<div class="t" style="left:227.50px;top:460px;font-size:12px;line-height:14px;letter-spacing:0.605px">01.04.92</div>
<div class="t" style="left:327.50px;top:460px;font-size:12px;line-height:14px;letter-spacing:0.280px">Computer AG</div>
<div class="t" style="left:427.75px;top:460px;font-size:12px;line-height:14px;letter-spacing:0.280px">Vertrieb</div>
<div class="a" style="left:25px;top:473px;width:734px;height:1px;background:repeating-linear-gradient(to right,#000 0,#000 1px,transparent 1px,transparent 2px)"></div>
<div class="t" id="t_r5c0" style="left:28.20px;top:476px;font-size:12px;line-height:14px;letter-spacing:0.200px;">Antonia</div>
<div class="t" style="left:128.00px;top:476px;font-size:12px;line-height:14px;letter-spacing:0.000px">Westermeier</div>
<div class="t" style="left:227.50px;top:476px;font-size:12px;line-height:14px;letter-spacing:0.605px">01.05.90</div>
<div class="t" style="left:327.50px;top:476px;font-size:12px;line-height:14px;letter-spacing:0.280px">Computer AG</div>
<div class="t" style="left:427.75px;top:476px;font-size:12px;line-height:14px;letter-spacing:0.280px">Vertrieb</div>
<div class="a" style="left:25px;top:489px;width:734px;height:1px;background:repeating-linear-gradient(to right,#000 0,#000 1px,transparent 1px,transparent 2px)"></div>
<div class="a" style="left:124px;top:394px;width:1px;height:99px;background:repeating-linear-gradient(to bottom,#000 0,#000 1px,transparent 1px,transparent 2px)"></div>
<div class="a" style="left:224px;top:394px;width:1px;height:99px;background:repeating-linear-gradient(to bottom,#000 0,#000 1px,transparent 1px,transparent 2px)"></div>
<div class="a" style="left:324px;top:394px;width:1px;height:99px;background:repeating-linear-gradient(to bottom,#000 0,#000 1px,transparent 1px,transparent 2px)"></div>
<div class="a" style="left:424px;top:394px;width:1px;height:99px;background:repeating-linear-gradient(to bottom,#000 0,#000 1px,transparent 1px,transparent 2px)"></div>
<div class="a" style="left:524px;top:394px;width:1px;height:99px;background:repeating-linear-gradient(to bottom,#000 0,#000 1px,transparent 1px,transparent 2px)"></div>
<div class="a" style="left:624px;top:394px;width:1px;height:99px;background:repeating-linear-gradient(to bottom,#000 0,#000 1px,transparent 1px,transparent 2px)"></div>
<div class="a" style="left:724px;top:394px;width:1px;height:99px;background:repeating-linear-gradient(to bottom,#000 0,#000 1px,transparent 1px,transparent 2px)"></div>
<div class="a" style="left:759px;top:372px;width:16px;height:121px;background:linear-gradient(to right,#f3f1ec,#fefefb)"></div>
<div class="sbtn" style="left:759px;top:372px;width:15px;height:16px;"></div>
<svg style="left:762px;top:377px" width="9" height="6" shape-rendering="crispEdges"><rect x="4" y="0" width="1" height="1" fill="#4d6185" fill-opacity="1"/><rect x="3" y="1" width="3" height="1" fill="#4d6185" fill-opacity="1"/><rect x="2" y="2" width="5" height="1" fill="#4d6185" fill-opacity="1"/><rect x="1" y="3" width="3" height="1" fill="#4d6185" fill-opacity="1"/><rect x="5" y="3" width="3" height="1" fill="#4d6185" fill-opacity="1"/><rect x="0" y="4" width="3" height="1" fill="#4d6185" fill-opacity="1"/><rect x="6" y="4" width="3" height="1" fill="#4d6185" fill-opacity="1"/><rect x="0" y="5" width="2" height="1" fill="#4d6185" fill-opacity="1"/><rect x="7" y="5" width="2" height="1" fill="#4d6185" fill-opacity="1"/></svg>
<div class="sbtn" style="left:759px;top:389px;width:15px;height:16px;"></div>
<svg style="left:763px;top:393px" width="7" height="8" shape-rendering="crispEdges"><rect x="0" y="0" width="6" height="1" fill="#eef4fe" fill-opacity="1"/><rect x="1" y="1" width="6" height="1" fill="#8cb0f8" fill-opacity="1"/><rect x="0" y="2" width="6" height="1" fill="#eef4fe" fill-opacity="1"/><rect x="1" y="3" width="6" height="1" fill="#8cb0f8" fill-opacity="1"/><rect x="0" y="4" width="6" height="1" fill="#eef4fe" fill-opacity="1"/><rect x="1" y="5" width="6" height="1" fill="#8cb0f8" fill-opacity="1"/><rect x="0" y="6" width="6" height="1" fill="#eef4fe" fill-opacity="1"/><rect x="1" y="7" width="6" height="1" fill="#8cb0f8" fill-opacity="1"/></svg>
<div class="sbtn" style="left:759px;top:477px;width:15px;height:16px;"></div>
<svg style="left:762px;top:483px" width="9" height="6" shape-rendering="crispEdges"><rect x="0" y="0" width="2" height="1" fill="#4d6185" fill-opacity="1"/><rect x="7" y="0" width="2" height="1" fill="#4d6185" fill-opacity="1"/><rect x="0" y="1" width="3" height="1" fill="#4d6185" fill-opacity="1"/><rect x="6" y="1" width="3" height="1" fill="#4d6185" fill-opacity="1"/><rect x="1" y="2" width="3" height="1" fill="#4d6185" fill-opacity="1"/><rect x="5" y="2" width="3" height="1" fill="#4d6185" fill-opacity="1"/><rect x="2" y="3" width="5" height="1" fill="#4d6185" fill-opacity="1"/><rect x="3" y="4" width="3" height="1" fill="#4d6185" fill-opacity="1"/><rect x="4" y="5" width="1" height="1" fill="#4d6185" fill-opacity="1"/></svg>
<div class="a" style="left:25px;top:493px;width:734px;height:17px;background:linear-gradient(to bottom,#f3f1ec,#fefefb)"></div>
<div class="sbtn" style="left:25px;top:494px;width:16px;height:15px;"></div>
<svg style="left:29px;top:497px" width="6" height="9" shape-rendering="crispEdges"><rect x="4" y="0" width="2" height="1" fill="#4d6185" fill-opacity="1"/><rect x="3" y="1" width="3" height="1" fill="#4d6185" fill-opacity="1"/><rect x="2" y="2" width="3" height="1" fill="#4d6185" fill-opacity="1"/><rect x="1" y="3" width="3" height="1" fill="#4d6185" fill-opacity="1"/><rect x="0" y="4" width="3" height="1" fill="#4d6185" fill-opacity="1"/><rect x="1" y="5" width="3" height="1" fill="#4d6185" fill-opacity="1"/><rect x="2" y="6" width="3" height="1" fill="#4d6185" fill-opacity="1"/><rect x="3" y="7" width="3" height="1" fill="#4d6185" fill-opacity="1"/><rect x="4" y="8" width="2" height="1" fill="#4d6185" fill-opacity="1"/></svg>
<div class="sbtn" style="left:42px;top:494px;width:642px;height:15px;"></div>
<svg style="left:358px;top:498px" width="8" height="7" shape-rendering="crispEdges"><rect x="0" y="0" width="1" height="6" fill="#eef4fe" fill-opacity="1"/><rect x="1" y="1" width="1" height="6" fill="#8cb0f8" fill-opacity="1"/><rect x="2" y="0" width="1" height="6" fill="#eef4fe" fill-opacity="1"/><rect x="3" y="1" width="1" height="6" fill="#8cb0f8" fill-opacity="1"/><rect x="4" y="0" width="1" height="6" fill="#eef4fe" fill-opacity="1"/><rect x="5" y="1" width="1" height="6" fill="#8cb0f8" fill-opacity="1"/><rect x="6" y="0" width="1" height="6" fill="#eef4fe" fill-opacity="1"/><rect x="7" y="1" width="1" height="6" fill="#8cb0f8" fill-opacity="1"/></svg>
<div class="sbtn" style="left:742px;top:494px;width:16px;height:15px;"></div>
<svg style="left:748px;top:497px" width="6" height="9" shape-rendering="crispEdges"><rect x="0" y="0" width="2" height="1" fill="#4d6185" fill-opacity="1"/><rect x="0" y="1" width="3" height="1" fill="#4d6185" fill-opacity="1"/><rect x="1" y="2" width="3" height="1" fill="#4d6185" fill-opacity="1"/><rect x="2" y="3" width="3" height="1" fill="#4d6185" fill-opacity="1"/><rect x="3" y="4" width="3" height="1" fill="#4d6185" fill-opacity="1"/><rect x="2" y="5" width="3" height="1" fill="#4d6185" fill-opacity="1"/><rect x="1" y="6" width="3" height="1" fill="#4d6185" fill-opacity="1"/><rect x="0" y="7" width="3" height="1" fill="#4d6185" fill-opacity="1"/><rect x="0" y="8" width="2" height="1" fill="#4d6185" fill-opacity="1"/></svg>
<div class="a" style="left:759px;top:493px;width:16px;height:17px;background:#ece9d8"></div>
<div class="btn" style="left:25px;top:523px;width:178px;height:18px;"></div>
<div class="t" id="t_b1" style="left:65.50px;top:526px;font-size:11px;line-height:13px;letter-spacing:-0.134px;">Einstellungen laden</div>
<div class="btn" style="left:215px;top:523px;width:178px;height:18px;"></div>
<div class="t" id="t_b2" style="left:245.70px;top:526px;font-size:11px;line-height:13px;letter-spacing:-0.145px;">Einstellungen speichern</div>
<div class="btn" style="left:567px;top:523px;width:98px;height:18px;"></div>
<div class="t" id="t_b3" style="left:588.70px;top:526px;font-size:11px;line-height:13px;letter-spacing:-0.100px;">Abbrechen</div>
<div class="btn" style="left:677px;top:523px;width:98px;height:18px;box-shadow:inset 0 1px 0 #cee7ff,inset 1px 0 0 #bcd4f6,inset -1px 0 0 #89ade4,inset 0 -1px 0 #6982ee,inset 0 2px 0 #bcd4f6,inset 0 -2px 0 #89ade4"></div>
<div class="t" id="t_b4" style="left:707.20px;top:526px;font-size:11px;line-height:13px;letter-spacing:0.320px;">Import</div>
</body></html>
